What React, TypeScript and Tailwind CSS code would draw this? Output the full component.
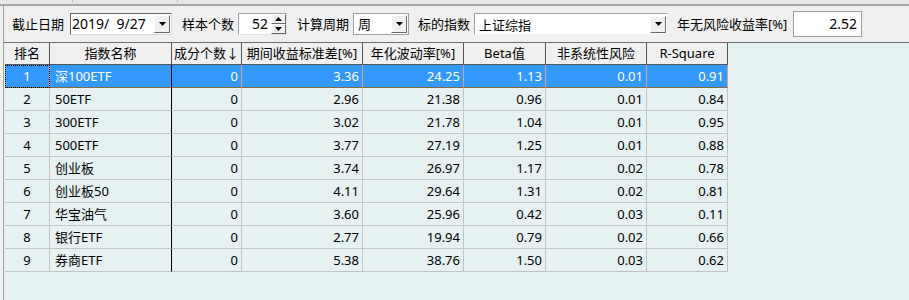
import React from 'react';

const columns = [
  { title: '排名', width: 'w-[45px]' },
  { title: '指数名称', width: 'w-[122px]' },
  { title: '成分个数↓', width: 'w-[70px]' },
  { title: '期间收益标准差[%]', width: 'w-[121px]' },
  { title: '年化波动率[%]', width: 'w-[101px]' },
  { title: 'Beta值', width: 'w-[82px]' },
  { title: '非系统性风险', width: 'w-[101px]' },
  { title: 'R-Square', width: 'w-[81px]' },
];

const rows = [
  ['1', '深100ETF', '0', '3.36', '24.25', '1.13', '0.01', '0.91'],
  ['2', '50ETF', '0', '2.96', '21.38', '0.96', '0.01', '0.84'],
  ['3', '300ETF', '0', '3.02', '21.78', '1.04', '0.01', '0.95'],
  ['4', '500ETF', '0', '3.77', '27.19', '1.25', '0.01', '0.88'],
  ['5', '创业板', '0', '3.74', '26.97', '1.17', '0.02', '0.78'],
  ['6', '创业板50', '0', '4.11', '29.64', '1.31', '0.02', '0.81'],
  ['7', '华宝油气', '0', '3.60', '25.96', '0.42', '0.03', '0.11'],
  ['8', '银行ETF', '0', '2.77', '19.94', '0.79', '0.02', '0.66'],
  ['9', '券商ETF', '0', '5.38', '38.76', '1.50', '0.03', '0.62'],
];

function DownTri() {
  return (
    <svg width="7" height="4" viewBox="0 0 7 4">
      <path d="M0 0h7L3.5 4z" fill="#000" />
    </svg>
  );
}

function UpTri() {
  return (
    <svg width="7" height="4" viewBox="0 0 7 4">
      <path d="M0 4h7L3.5 0z" fill="#000" />
    </svg>
  );
}

function DropButton() {
  return (
    <div className="flex h-full w-[16px] items-center justify-center border border-t-white border-l-white border-b-[#696969] border-r-[#696969] bg-[#f0f0f0]">
      <DownTri />
    </div>
  );
}

function Label({ children, className }: { children: React.ReactNode; className: string }) {
  return <div className={`shrink-0 whitespace-nowrap ${className}`}>{children}</div>;
}

export default function App() {
  return (
    <div className="flex h-[300px] w-[909px] flex-col overflow-hidden bg-[#f0f0f0] font-['Noto_Sans','Noto_Sans_CJK_SC',sans-serif] text-[13px] leading-none text-black">
      {/* top strip */}
      <div className="flex h-[4px] bg-[#e8e8e8]">
        <div className="ml-[72px] h-[2px] w-px bg-[#b8b8b8]" />
        <div className="ml-[104px] h-[2px] w-px bg-[#b8b8b8]" />
      </div>
      <div className="h-[2px] bg-[#a8a8a8]" />

      <div className="ml-[3px] flex flex-1 flex-col border-l border-[#a0a0a0]">
        {/* toolbar */}
        <div className="flex h-[37px] items-center border-b border-[#707070] pl-[8px]">
          <Label className="w-[58px]">截止日期</Label>
          <div className="flex h-[22px] w-[102px] items-center border border-t-[#696969] border-l-[#696969] border-b-[#d8d8d8] border-r-[#d8d8d8] bg-white py-[1px] pr-[1px]">
            <span className="flex-1 pl-[1px] text-[14px]">2019/&nbsp;&nbsp;9/27</span>
            <DropButton />
          </div>

          <Label className="ml-[10px] w-[56px]">样本个数</Label>
          <div className="flex h-[22px] w-[49px] items-center border border-t-[#a0a0a0] border-l-[#a0a0a0] border-b-[#e0e0e0] border-r-[#e0e0e0] bg-white">
            <span className="flex-1 pr-[3px] text-right text-[14px]">52</span>
            <div className="flex h-full w-[15px] flex-col">
              <div className="flex flex-1 items-center justify-center border border-t-white border-l-white border-b-[#696969] border-r-[#696969] bg-[#f0f0f0]">
                <UpTri />
              </div>
              <div className="flex flex-1 items-center justify-center border border-t-white border-l-white border-b-[#696969] border-r-[#696969] bg-[#f0f0f0]">
                <DownTri />
              </div>
            </div>
          </div>

          <Label className="ml-[10px] w-[56px]">计算周期</Label>
          <div className="flex h-[22px] w-[56px] items-center border border-[#a0a0a0] bg-white py-[1px] pr-[1px]">
            <span className="flex-1 pl-[4px]">周</span>
            <DropButton />
          </div>

          <Label className="ml-[9px] w-[56px]">标的指数</Label>
          <div className="flex h-[22px] w-[194px] items-end border border-t-[#a0a0a0] border-l-[#a0a0a0] border-b-[#f0f0f0] border-r-[#f0f0f0] bg-white py-[1px] pr-[1px]">
            <span className="flex-1 pb-[1px] pl-[4px]">上证综指</span>
            <div className="h-[17px] self-center">
              <DropButton />
            </div>
          </div>

          <Label className="ml-[9px] w-[116px]">年无风险收益率[%]</Label>
          <div className="flex h-[26px] w-[69px] items-center justify-end border border-[#a0a0a0] bg-white pr-[4px] text-[14px]">
            2.52
          </div>
        </div>

        {/* grid */}
        <div className="flex-1 bg-[#e6f1f1] pl-px">
          <div className="flex h-[22px] w-max bg-[#f0f0f0]">
            {columns.map((c) => (
              <div
                key={c.title}
                className={`${c.width} flex items-center justify-center border-r border-b border-[#555555]`}
              >
                {c.title}
              </div>
            ))}
          </div>
          {rows.map((r, i) => {
            const sel = i === 0;
            return (
              <div key={r[0]} className={`flex h-[23px] w-max ${sel ? 'bg-[#3399ff] text-white' : ''}`}>
                {r.map((v, j) => {
                  const border =
                    j === 1
                      ? 'border-r-black'
                      : sel
                        ? 'border-r-[#d2a878]'
                        : 'border-r-[#c4c4c4]';
                  const bottom = sel ? 'border-b-[#8a6a40]' : 'border-b-[#c4c4c4]';
                  const align = j === 0 ? 'justify-center' : j === 1 ? 'justify-start pl-[5px]' : 'justify-end pr-[3px]';
                  const focus = sel && j === 0 ? 'outline-1 outline-dotted -outline-offset-1 outline-black' : '';
                  return (
                    <div
                      key={j}
                      className={`${columns[j].width} flex items-center border-r border-b ${border} ${bottom} ${align} ${focus}`}
                    >
                      {v}
                    </div>
                  );
                })}
              </div>
            );
          })}
        </div>
      </div>
    </div>
  );
}
